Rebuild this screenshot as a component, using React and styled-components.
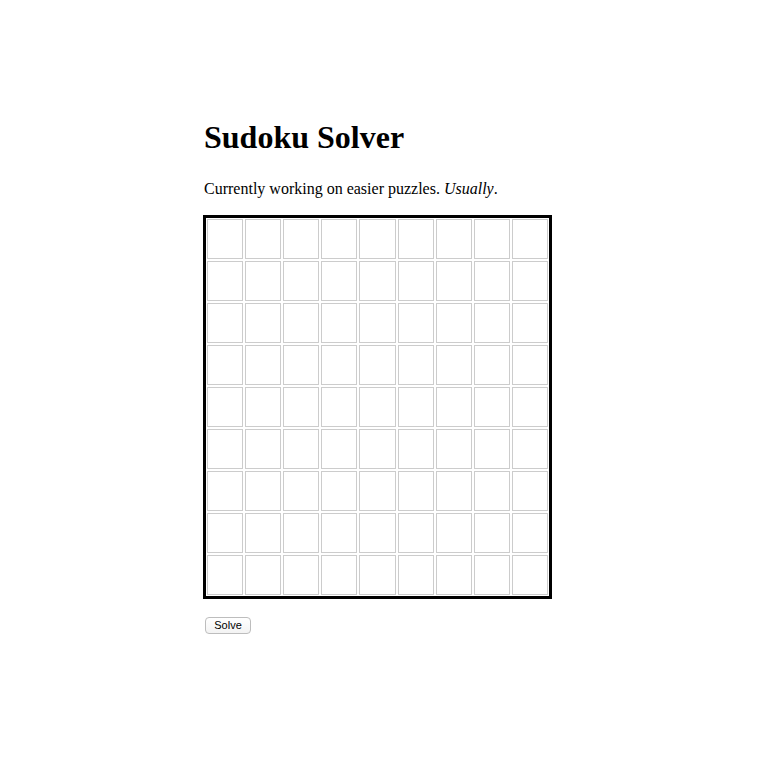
import React, { Component } from 'react'
import styled, { createGlobalStyle } from 'styled-components'

const Global = createGlobalStyle`
  body {
    margin: 0;
    background: #fff;
    font-family: "Liberation Serif", "Times New Roman", serif;
    color: #000;
  }
`;

const Page = styled.div`
  width: 354px;
  margin: 0 auto;
  padding-top: 119px;
`;

const Title = styled.h1`
  font-size: 32px;
  font-weight: bold;
  line-height: 37px;
  margin: 0 0 0 1px;
`;

const Lead = styled.p`
  font-size: 16px;
  line-height: 18px;
  margin: 24px 0 0 1px;
`;

const Board = styled.div`
  box-sizing: border-box;
  width: 349px;
  height: 384px;
  margin-top: 17px;
  border: 3px solid #000;
  padding: 1px;
  display: grid;
  grid-template-columns: repeat(9, 1fr);
  grid-template-rows: repeat(9, 1fr);
  gap: 2px;
`;

const Cell = styled.input`
  box-sizing: border-box;
  width: 100%;
  height: 100%;
  margin: 0;
  padding: 0;
  border: 1px solid #cccccc;
  background: #fff;
  text-align: center;
  font-size: 18px;
  font-family: "Liberation Sans", Arial, sans-serif;
  outline: none;
`;

const Button = styled.button`
  box-sizing: border-box;
  margin: 18px 0 0 2px;
  width: 46px;
  height: 17px;
  padding: 0;
  border: 1px solid #bdbdbd;
  border-radius: 4px;
  background: linear-gradient(#ffffff, #f3f3f3);
  font-family: "Liberation Sans", Arial, sans-serif;
  font-size: 11px;
  line-height: 15px;
  color: #000;
`;

export class App extends Component {
  state = {
    cells: Array(81).fill('')
  }

  change = (i, v) => {
    const cells = this.state.cells.slice()
    cells[i] = v.replace(/[^1-9]/g, '').slice(0, 1)
    this.setState({ cells })
  }

  render() {
    return (
      <Page>
        <Global />
        <Title>Sudoku Solver</Title>
        <Lead>Currently working on easier puzzles. <em>Usually</em>.</Lead>
        <Board>
          {this.state.cells.map((c, i) =>
            <Cell key={i} value={c} onChange={e => this.change(i, e.target.value)} />
          )}
        </Board>
        <Button>Solve</Button>
      </Page>
    )
  }
}

export default App
